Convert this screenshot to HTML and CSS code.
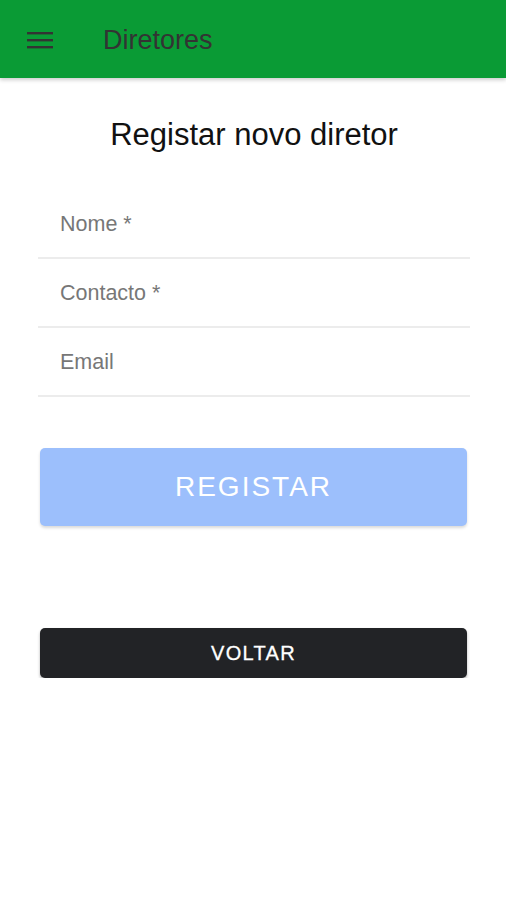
FILE: index.html
```html
<!DOCTYPE html>
<html lang="pt">
<head>
  <meta charset="UTF-8" />
  <meta name="viewport" content="width=device-width, initial-scale=1.0"/>
  <title>Diretores</title>
  <link rel="stylesheet" href="styles.css">
</head>
<body>
  <header class="topbar">
    <svg class="menu-icon" width="26" height="18" viewBox="0 0 26 18">
      <rect x="0" y="1" width="26" height="2.4" fill="#333"/>
      <rect x="0" y="8" width="26" height="2.4" fill="#333"/>
      <rect x="0" y="15" width="26" height="2.4" fill="#333"/>
    </svg>
    <span class="topbar-title">Diretores</span>
  </header>

  <main class="content">
    <h1>Registar novo diretor</h1>

    <form class="form">
      <div class="field"><input type="text" placeholder="Nome *" /></div>
      <div class="field"><input type="text" placeholder="Contacto *" /></div>
      <div class="field"><input type="email" placeholder="Email" /></div>
    </form>

    <button class="btn-register">REGISTAR</button>
    <button class="btn-back">VOLTAR</button>
  </main>
</body>
</html>
```

FILE: styles.css
```css
body {
  margin: 0;
  font-family: "Liberation Sans", Arial, sans-serif;
  background: #fff;
}
.topbar {
  height: 78px;
  background: #0a9b35;
  display: flex;
  align-items: center;
  padding-left: 27px;
  box-shadow: 0 2px 4px rgba(0, 0, 0, 0.2);
}
.menu-icon {
  margin-top: 2px;
}
.topbar-title {
  margin-left: 50px;
  font-size: 27px;
  color: #333;
  margin-top: 2px;
}
.content {
  padding: 0 36px 0 38px;
}
h1 {
  margin: 39px 0 37px;
  text-align: center;
  font-size: 31px;
  font-weight: normal;
  color: #111;
}
.form {
  display: flex;
  flex-direction: column;
}
.field {
  height: 67px;
  border-bottom: 2px solid #ececec;
  display: flex;
  align-items: center;
}
.field input {
  border: none;
  outline: none;
  width: 100%;
  padding: 0 22px;
  font-family: inherit;
  font-size: 21.5px;
  margin-top: 2px;
}
.field input::placeholder {
  color: #777;
}
.btn-register {
  display: block;
  width: 427px;
  height: 78px;
  margin: 51px 0 0 2px;
  border: none;
  border-radius: 5px;
  background: #9cbffc;
  color: #fff;
  font-family: inherit;
  font-size: 28px;
  letter-spacing: 2px;
  box-shadow: 0 2px 3px rgba(0, 0, 0, 0.15);
  cursor: pointer;
}
.btn-back {
  display: block;
  width: 427px;
  height: 50px;
  margin: 102px 0 0 2px;
  border: none;
  border-radius: 5px;
  background: #222326;
  color: #fff;
  font-family: inherit;
  font-size: 20px;
  letter-spacing: 1.3px;
  -webkit-text-stroke: 0.3px #fff;
  box-shadow: 0 2px 3px rgba(0, 0, 0, 0.3);
  cursor: pointer;
}
```
